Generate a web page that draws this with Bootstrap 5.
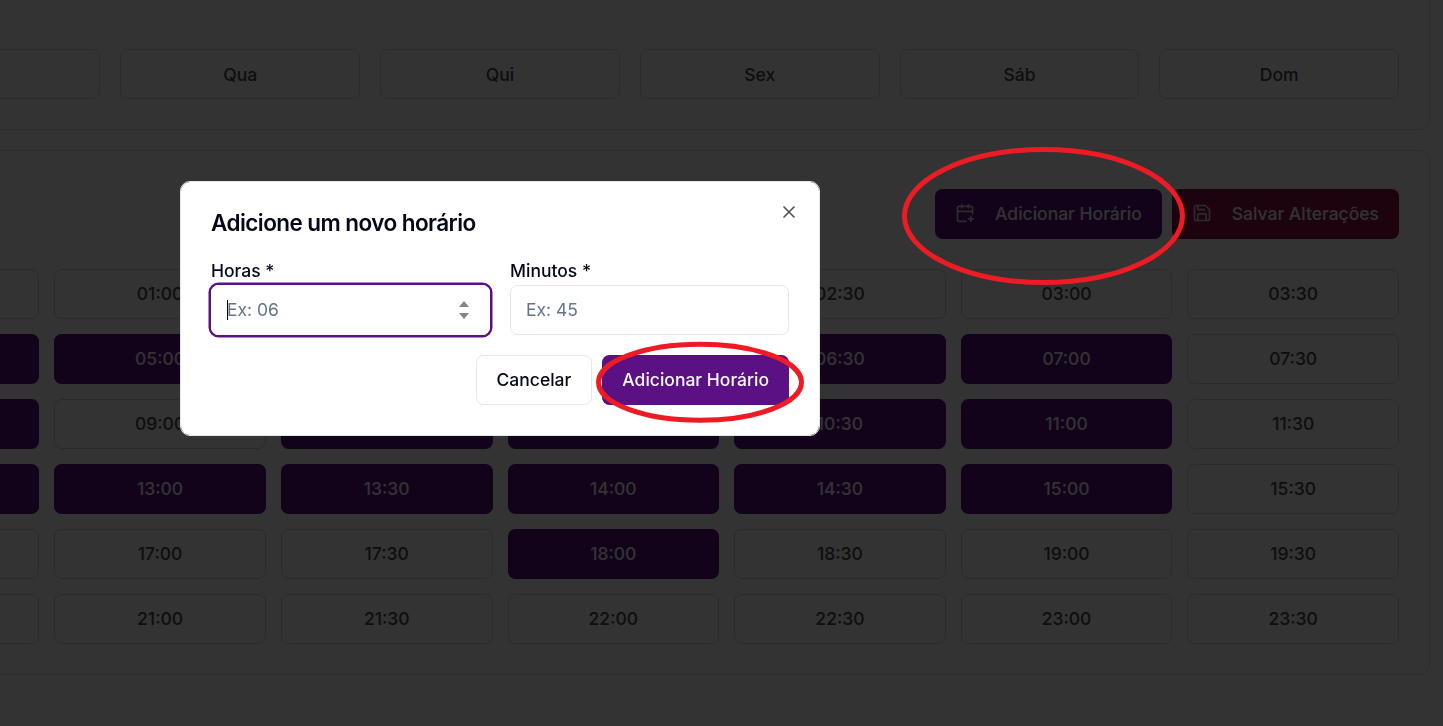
<!DOCTYPE html>
<html lang="pt-BR">
<head>
<meta charset="utf-8">
<meta name="viewport" content="width=device-width, initial-scale=1">
<title>Horários</title>
<link href="https://cdn.jsdelivr.net/npm/bootstrap@5.3.0/dist/css/bootstrap.min.css" rel="stylesheet">
<style>
  :root { --roxo: #5b1084; --linha: #e2e8f0; --tinta: #020817; }
  html { font-size: 20px; }
  body { font-family: Inter, "Liberation Sans", sans-serif; font-size: 17.5px; line-height: 25px; font-weight: 500; color: var(--tinta); background: #fff; }
  .viewport { height: 726px; }
  .page { width: 1860px; margin-right: 13px; --linha: #d6d8db; }
  .panel { border: 1px solid #dddfe2; border-radius: 10px; padding: 30px; background: #fff; }
  .panel-days { height: 151px; margin-top: -21px; padding-top: 69px; }
  .panel-hours { margin-top: 20px; padding-top: 38px; }
  .grid-days { display: grid; grid-template-columns: repeat(7, 1fr); gap: 20px; }
  .grid-hours { display: grid; grid-template-columns: repeat(8, 1fr); gap: 15px; }
  .btn { --bs-btn-font-size: 17.5px; --bs-btn-line-height: 25px; --bs-btn-font-weight: 500; --bs-btn-padding-x: 20px; --bs-btn-padding-y: 0;
         --bs-btn-border-radius: 7.5px; --bs-btn-border-color: var(--linha); --bs-btn-color: var(--tinta); height: 50px; white-space: nowrap; padding-bottom: 2px; }
  .page .btn { --bs-btn-color: #45484e; }
  .grid-days .btn { padding-bottom: 0; }
  .btn.btn-roxo { --bs-btn-bg: var(--roxo); --bs-btn-color: #f8fafc; border: 0; }
  .btn.btn-salvar { --bs-btn-bg: #8c0f48; --bs-btn-color: #f8fafc; border: 0; }
  .btn svg { margin-right: 20px; opacity: .85; }
  .modal-backdrop { --bs-backdrop-opacity: .8; }
  .modal-dialog { width: 640px; max-width: 640px; margin: 181px 0 0 180px; }
  .modal-content { border: 1px solid var(--linha); border-radius: 10px; padding: 30px; height: 255px; }
  .modal-title { font-size: 22.5px; line-height: 22.5px; font-weight: 600; letter-spacing: -.025em; }
  .fechar { top: 20px; right: 20px; line-height: 0; opacity: .7; color: var(--tinta); }
  .fields { gap: 20px; margin-top: 27px; }
  .fields label { line-height: 17.5px; height: 23.5px; display: block; }
  .campo { height: 50px; border: 1px solid var(--linha); border-radius: 7.5px; padding: 0 15px 1px; color: #64748b; font-weight: 400; }
  .campo.ativo { border-color: #fff; box-shadow: 0 0 0 2.5px var(--roxo); padding-right: 19px; }
  .cursor { width: 1px; height: 20px; background: #000; }
  .acoes { gap: 10px; margin-top: 20px; }
  .marcas { z-index: 2000; }
</style>
</head>
<body>
<div class="viewport d-flex justify-content-end overflow-hidden">
  <main class="page flex-shrink-0">
    <section class="panel panel-days">
      <div class="grid-days" id="dias"></div>
    </section>
    <section class="panel panel-hours">
      <div class="d-flex justify-content-end" style="gap:10px;margin-bottom:30px">
        <button class="btn btn-roxo d-flex align-items-center">
          <svg width="20" height="20" viewBox="0 0 24 24" fill="none" stroke="currentColor" stroke-width="2" stroke-linecap="round" stroke-linejoin="round"><path d="M8 2v4M16 2v4"/><path d="M21 13V6a2 2 0 0 0-2-2H5a2 2 0 0 0-2 2v14a2 2 0 0 0 2 2h8"/><path d="M3 10h18M16 19h6M19 16v6"/></svg>Adicionar Horário</button>
        <button class="btn btn-salvar d-flex align-items-center">
          <svg width="20" height="20" viewBox="0 0 24 24" fill="none" stroke="currentColor" stroke-width="2" stroke-linecap="round" stroke-linejoin="round"><path d="M15.2 3a2 2 0 0 1 1.4.6l3.8 3.8a2 2 0 0 1 .6 1.4V19a2 2 0 0 1-2 2H5a2 2 0 0 1-2-2V5a2 2 0 0 1 2-2z"/><path d="M17 21v-7a1 1 0 0 0-1-1H8a1 1 0 0 0-1 1v7"/><path d="M7 3v4a1 1 0 0 0 1 1h7"/></svg>Salvar Alterações</button>
      </div>
      <div class="grid-hours" id="horas"></div>
    </section>
  </main>
</div>

<div class="modal-backdrop show"></div>
<div class="modal d-block" tabindex="-1" role="dialog">
  <div class="modal-dialog">
    <div class="modal-content">
      <h2 class="modal-title mb-0">Adicione um novo horário</h2>
      <span class="fechar position-absolute"><svg width="20" height="20" viewBox="0 0 24 24" fill="none" stroke="currentColor" stroke-width="2" stroke-linecap="round"><path d="M18 6 6 18M6 6l12 12"/></svg></span>
      <div class="fields d-flex">
        <div class="flex-fill w-50">
          <label>Horas *</label>
          <div class="campo ativo d-flex align-items-center"><span class="cursor"></span><span style="margin-left:-1px">Ex: 06</span>
            <svg class="ms-auto" width="12" height="18" viewBox="0 0 12 18" fill="#858585"><path d="M6 0 11 6H1zM6 18 1 12h10z"/></svg></div>
        </div>
        <div class="flex-fill w-50">
          <label>Minutos *</label>
          <div class="campo d-flex align-items-center">Ex: 45</div>
        </div>
      </div>
      <div class="acoes d-flex justify-content-end">
        <button class="btn">Cancelar</button>
        <button class="btn btn-roxo">Adicionar Horário</button>
      </div>
    </div>
  </div>
</div>

<svg class="marcas position-fixed top-0 start-0 pe-none" width="1443" height="726" fill="none" stroke="#ed1c24" stroke-width="5">
  <ellipse cx="1043.5" cy="216" rx="139" ry="66.5"/>
  <ellipse cx="700" cy="382.3" rx="101.5" ry="38"/>
</svg>

<script src="https://cdn.jsdelivr.net/npm/bootstrap@5.3.0/dist/js/bootstrap.bundle.min.js"></script>
<script>
  document.getElementById('dias').innerHTML = ['', '', 'Qua', 'Qui', 'Sex', 'Sáb', 'Dom']
    .map(d => `<button class="btn">${d}</button>`).join('');
  const ativos = ['04:30', '05:00', '05:30', '06:00', '06:30', '07:00', '08:30', '09:30', '10:00', '10:30', '11:00',
    '12:30', '13:00', '13:30', '14:00', '14:30', '15:00', '18:00'];
  let html = '';
  for (let i = 0; i < 48; i++) {
    const t = String(i >> 1).padStart(2, '0') + (i % 2 ? ':30' : ':00');
    // the first two columns lie past the left edge and carry no label
    html += `<button class="btn ${ativos.includes(t) ? 'btn-roxo' : ''}">${i % 8 > 1 ? t : ''}</button>`;
  }
  document.getElementById('horas').innerHTML = html;
</script>
</body>
</html>
